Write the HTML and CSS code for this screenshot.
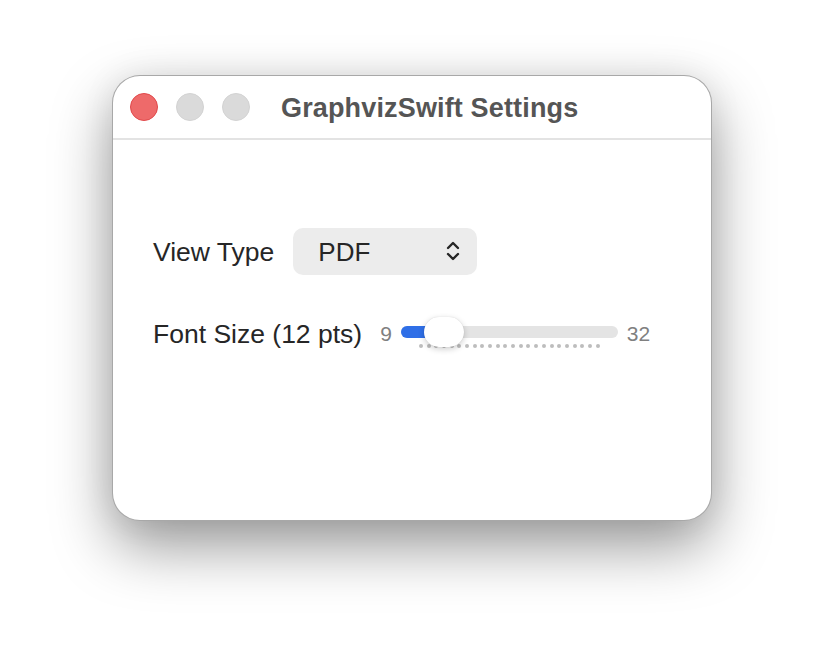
FILE: index.html
```html
<!DOCTYPE html>
<html>
<head>
<meta charset="utf-8">
<link rel="stylesheet" href="styles.css">
</head>
<body>
<div class="window">
  <div class="titlebar">
    <div class="lights">
      <span class="light red"></span>
      <span class="light gray"></span>
      <span class="light gray"></span>
    </div>
    <div class="title">GraphvizSwift Settings</div>
  </div>
  <div class="content">
    <div class="row row-view">
      <span class="label">View Type</span>
      <div class="popup">
        <span class="popup-value">PDF</span>
        <svg class="chevrons" width="16" height="22" viewBox="0 0 16 22">
          <path d="M3 8 L8 3 L13 8" fill="none" stroke="#262626" stroke-width="2.4" stroke-linecap="round" stroke-linejoin="round"/>
          <path d="M3 14 L8 19 L13 14" fill="none" stroke="#262626" stroke-width="2.4" stroke-linecap="round" stroke-linejoin="round"/>
        </svg>
      </div>
    </div>
    <div class="row row-font">
      <span class="label">Font Size (12 pts)</span>
      <span class="minmax min">9</span>
      <div class="slider">
        <div class="track"><div class="fill"></div></div>
        <div class="ticks">
          <i></i><i></i><i></i><i></i><i></i><i></i><i></i><i></i><i></i><i></i><i></i><i></i>
          <i></i><i></i><i></i><i></i><i></i><i></i><i></i><i></i><i></i><i></i><i></i><i></i>
        </div>
        <div class="thumb"></div>
      </div>
      <span class="minmax max">32</span>
    </div>
  </div>
</div>
</body>
</html>
```

FILE: styles.css
```css
html, body {
  margin: 0;
  padding: 0;
  background: #ffffff;
}
body {
  width: 824px;
  height: 668px;
  overflow: hidden;
  font-family: "Liberation Sans", Arial, sans-serif;
}
.window {
  box-sizing: border-box;
  width: 600px;
  height: 446px;
  margin: 75px 0 0 112px;
  background: #ffffff;
  border: 1px solid rgba(0, 0, 0, 0.34);
  border-radius: 28px;
  box-shadow: 0 26px 60px rgba(0, 0, 0, 0.4), 0 0 34px rgba(0, 0, 0, 0.07);
  overflow: hidden;
}
.titlebar {
  border-bottom: 2px solid #e3e3e3;
  display: flex;
  align-items: center;
  padding-left: 17px;
  box-sizing: border-box;
  height: 64px;
}
.lights {
  display: flex;
  gap: 18px;
}
.light {
  width: 28px;
  height: 28px;
  border-radius: 50%;
  box-sizing: border-box;
}
.light.red {
  background: #ee6a6a;
  border: 1px solid #e0484a;
}
.light.gray {
  background: #dadada;
  border: 1px solid #d2d2d2;
}
.title {
  margin-left: 31px;
  margin-top: 2px;
  font-weight: bold;
  font-size: 27px;
  color: #555555;
  letter-spacing: 0.15px;
}
.content {
  padding: 88px 0 0 40px;
}
.row {
  display: flex;
  align-items: center;
  height: 46px;
}
.label {
  font-size: 26.5px;
  color: #262626;
}
.row-view {
  gap: 19px;
}
.row-view .label {
  margin-top: 3px;
}
.popup {
  width: 184px;
  height: 47px;
  box-sizing: border-box;
  background: #ececec;
  border-radius: 10px;
  display: flex;
  align-items: center;
  justify-content: space-between;
  padding: 0 16px 0 25px;
}
.popup-value {
  font-size: 26px;
  color: #262626;
  margin-top: 2px;
}
.row-font {
  margin-top: 37px;
}
.minmax {
  font-size: 21px;
  color: #808080;
}
.min {
  margin-left: 18px;
}
.max {
  margin-left: 9px;
}
.slider {
  position: relative;
  width: 217px;
  height: 46px;
  margin-left: 9px;
}
.track {
  margin-top: 15px;
  height: 12px;
  border-radius: 6px;
  background: #e4e4e4;
  overflow: hidden;
}
.fill {
  width: 40px;
  height: 12px;
  background: #2f6fe7;
}
.ticks {
  display: flex;
  justify-content: space-between;
  margin: 6px 18px 0 18px;
}
.ticks i {
  display: block;
  width: 4px;
  height: 4px;
  border-radius: 50%;
  background: #bdbdbd;
}
.thumb {
  position: absolute;
  left: 23px;
  top: 6px;
  width: 40px;
  height: 30px;
  border-radius: 15px;
  background: #ffffff;
  box-shadow: 0 2px 6px rgba(0, 0, 0, 0.2), 0 0 1px rgba(0, 0, 0, 0.15);
}
```
